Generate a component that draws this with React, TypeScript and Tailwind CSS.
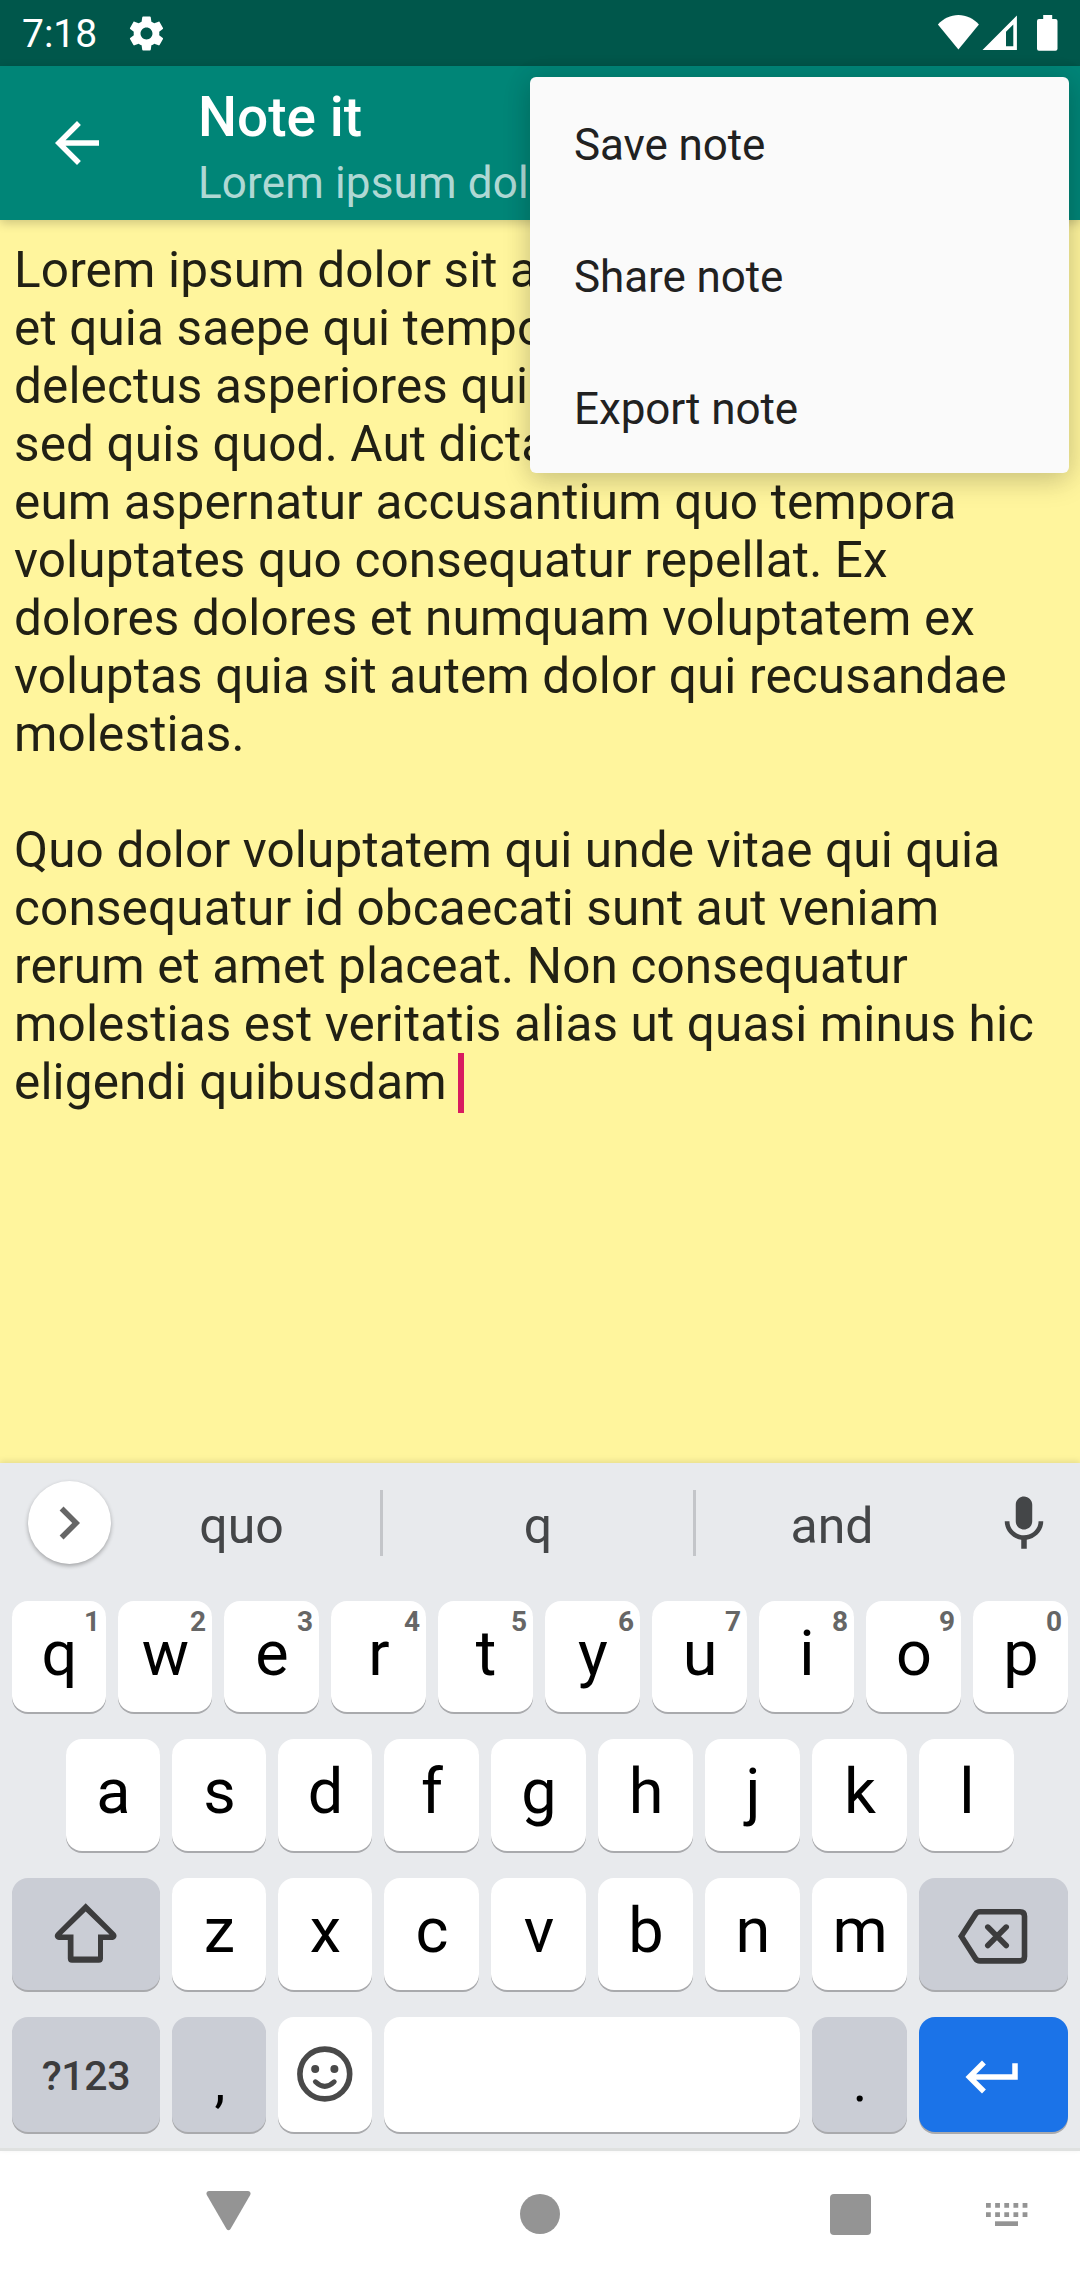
import type { ReactNode } from "react";

const noteLines = [
  "Lorem ipsum dolor sit a",
  "et quia saepe qui tempo",
  "delectus asperiores qui",
  "sed quis quod. Aut dicta",
  "eum aspernatur accusantium quo tempora",
  "voluptates quo consequatur repellat. Ex",
  "dolores dolores et numquam voluptatem ex",
  "voluptas quia sit autem dolor qui recusandae",
  "molestias.",
  "",
  "Quo dolor voluptatem qui unde vitae qui quia",
  "consequatur id obcaecati sunt aut veniam",
  "rerum et amet placeat. Non consequatur",
  "molestias est veritatis alias ut quasi minus hic",
];

const topRow = ["q", "w", "e", "r", "t", "y", "u", "i", "o", "p"];
const homeRow = ["a", "s", "d", "f", "g", "h", "j", "k", "l"];
const bottomRow = ["z", "x", "c", "v", "b", "n", "m"];

function StatusBar() {
  return (
    <div className="flex h-[66px] items-center bg-[#00574b] pl-[22px] pr-[22px] text-white">
      <span className="w-[104px] pt-[2px] text-[39px] leading-[64px]">7:18</span>
      <svg className="size-[41px]" viewBox="0 0 24 24" fill="currentColor">
        <path d="M19.43 12.98c.04-.32.07-.64.07-.98s-.03-.66-.07-.98l2.11-1.65c.19-.15.24-.42.12-.64l-2-3.46c-.12-.22-.39-.3-.61-.22l-2.49 1c-.52-.4-1.08-.73-1.69-.98l-.38-2.65C14.46 2.18 14.25 2 14 2h-4c-.25 0-.46.18-.49.42l-.38 2.65c-.61.25-1.17.59-1.69.98l-2.49-1c-.23-.09-.49 0-.61.22l-2 3.46c-.13.22-.07.49.12.64l2.11 1.65c-.04.32-.07.65-.07.98s.03.66.07.98l-2.11 1.65c-.19.15-.24.42-.12.64l2 3.46c.12.22.39.3.61.22l2.49-1c.52.4 1.08.73 1.69.98l.38 2.65c.03.24.24.42.49.42h4c.25 0 .46-.18.49-.42l.38-2.65c.61-.25 1.17-.59 1.69-.98l2.49 1c.23.09.49 0 .61-.22l2-3.46c.12-.22.07-.49-.12-.64l-2.11-1.65zM12 15.5c-1.93 0-3.5-1.57-3.5-3.5s1.57-3.5 3.5-3.5 3.5 1.57 3.5 3.5-1.57 3.5-3.5 3.5z" />
      </svg>
      <svg className="ml-auto h-[66px] w-[121px]" viewBox="937 0 121 66" fill="currentColor">
        <path d="M937.9 24.4C943.5 18.500 950.500 15 958.400 15s14.900 3.500 20.500 9.400L958.400 49.500z" />
        <path fillRule="evenodd" d="M1016.900 15.500V50H982.500zM1013.300 24.500L1006 31.800V46.200H1013.300z" />
        <path d="M1043.200 15h9v4h3.300a2 2 0 0 1 2 2v27.700a2 2 0 0 1-2 2h-16.500a2 2 0 0 1-2-2V21a2 2 0 0 1 2-2h4.200z" />
      </svg>
    </div>
  );
}

function AppBar() {
  return (
    <header className="relative z-10 flex h-[154px] bg-[#008577] pl-[44px] text-white shadow-[0_3px_10px_rgba(0,0,0,0.2)]">
      <svg className="mt-[44px] size-[66px]" viewBox="0 0 24 24" fill="currentColor">
        <path d="M20 11H7.830l5.590-5.590L12 4l-8 8 8 8 1.410-1.410L7.830 13H20v-2z" />
      </svg>
      <div className="ml-[88px] flex flex-col whitespace-nowrap pt-[19px]">
        <h1 className="text-[55px] font-medium leading-[64px]">Note it</h1>
        <p className="pt-px text-[44px] leading-[66px] tracking-[0.15px] text-white/70">Lorem ipsum dol</p>
      </div>
    </header>
  );
}

function OverflowMenu() {
  return (
    <div className="absolute left-[530px] top-[77px] z-20 flex h-[396px] w-[539px] flex-col rounded-[6px] bg-[#fafafa] shadow-[0_8px_28px_rgba(0,0,0,0.17),0_0_28px_rgba(0,0,0,0.08)]">
      {["Save note", "Share note", "Export note"].map((label) => (
        <button key={label} className="h-[132px] pl-[44px] pt-[4px] text-left text-[44px] tracking-[-0.1px] text-[#212121]">
          {label}
        </button>
      ))}
    </div>
  );
}

function NoteEditor() {
  return (
    <main className="h-[1243px] whitespace-nowrap bg-[#fff59d] pl-[14px] pt-[21px] text-[49.5px] leading-[58px] tracking-[0.14px] text-black/87">
      {noteLines.map((line, i) => (
        <p key={i} className="h-[58px]">
          {line}
        </p>
      ))}
      <p className="flex h-[58px]">
        eligendi quibusdam
        <span className="ml-[11px] h-[60px] w-[6px] bg-[#d81b60]" />
      </p>
    </main>
  );
}

function Key({ tone = "bg-white", size = "w-[95px]", children }: { tone?: string; size?: string; children?: ReactNode }) {
  return (
    <div className={`relative flex items-center justify-center rounded-[16px] text-[63px] text-black shadow-[0_2px_0_#a9aaad] ${tone} ${size}`}>
      {children}
    </div>
  );
}

function Letter({ children }: { children: ReactNode }) {
  return <span className="pb-[7px] pl-px leading-none">{children}</span>;
}

const narrow = "w-[94px]";
const special = "bg-[#cacdd5]";

function SuggestionStrip() {
  return (
    <div className="flex h-[138px] pl-[28px] text-[50px] text-[#444648]">
      <div className="mt-[18px] flex size-[83px] items-center justify-center rounded-full bg-white shadow-[0_2px_4px_rgba(0,0,0,0.3)]">
        <svg className="mr-px size-[66px]" viewBox="0 0 24 24" fill="#666">
          <path d="M10 6L8.590 7.410 13.170 12l-4.580 4.590L10 18l6-6z" />
        </svg>
      </div>
      <span className="-ml-[8px] w-[277px] pt-[34px] text-center leading-[58px]">quo</span>
      <span className="mt-[27px] h-[66px] w-[3px] bg-[#c3c5c9]" />
      <span className="w-[310px] pt-[34px] text-center leading-[58px]">q</span>
      <span className="mt-[27px] h-[66px] w-[3px] bg-[#c3c5c9]" />
      <span className="w-[272px] pt-[34px] text-center leading-[58px]">and</span>
      <svg className="ml-[23px] mt-[28px] size-[66px]" viewBox="0 0 24 24" fill="#444648">
        <path d="M12 14c1.660 0 2.990-1.340 2.990-3L15 5c0-1.660-1.340-3-3-3S9 3.340 9 5v6c0 1.660 1.340 3 3 3zm5.300-3c0 3-2.540 5.100-5.300 5.100S6.700 14 6.700 11H5c0 3.410 2.720 6.230 6 6.720V21h2v-3.280c3.280-.48 6-3.300 6-6.720h-1.700z" />
      </svg>
    </div>
  );
}

function Keyboard() {
  return (
    <section className="relative z-10 h-[688px] border-b-[3px] border-[#dfe1e0] bg-[#e8eaed] shadow-[0_-2px_6px_rgba(0,0,0,0.1)]">
      <SuggestionStrip />
      <div className="flex flex-col gap-[27px]">
        <div className="flex h-[111px] gap-[12px] px-[12px]">
          {topRow.map((letter, i) => (
            <Key key={letter} size={i < 2 ? narrow : undefined}>
              <Letter>{letter}</Letter>
              <span className="absolute right-[6px] top-[6px] text-[28px] font-bold leading-[30px] text-[#666]">{(i + 1) % 10}</span>
            </Key>
          ))}
        </div>
        <div className="flex h-[112px] gap-[12px] px-[66px]">
          {homeRow.map((letter, i) => (
            <Key key={letter} size={i < 3 ? narrow : undefined}>
              <Letter>{letter}</Letter>
            </Key>
          ))}
        </div>
        <div className="flex h-[112px] gap-[12px] px-[12px]">
          <Key tone={special} size="w-[148px]">
            <svg className="h-[112px] w-[148px]" viewBox="12 1878 148 112" fill="#3c3c3d">
              <path
                fillRule="evenodd"
                d="M85.700 1903.300L115.200 1932.800C118.300 1936 115.500 1940 112.500 1940H103V1958.500Q103 1962.700 98.800 1962.700H72Q67.800 1962.700 67.800 1958.500V1940H59C55.800 1940 53 1936 56.200 1932.800ZM85.700 1911.500L62 1934.500H73.500V1956.600H98V1934.500H109.500Z"
              />
            </svg>
          </Key>
          {bottomRow.map((letter, i) => (
            <Key key={letter} size={i < 2 ? narrow : undefined}>
              <Letter>{letter}</Letter>
            </Key>
          ))}
          <Key tone={special} size="w-[149px]">
            <svg className="h-[112px] w-[149px]" viewBox="919 1878 149 112" fill="none" stroke="#3c3c3d" strokeWidth="5.6">
              <path d="M961.300 1936.300L975.500 1914.200Q977 1911.800 980 1911.800H1020Q1024.500 1911.800 1024.500 1916.300V1956.500Q1024.500 1960.900 1020 1960.900H980Q977 1960.900 975.500 1958.500Z" />
              <path d="M987.800 1927.100L1006.200 1945.500M1006.200 1927.100L987.800 1945.500" strokeLinecap="round" />
            </svg>
          </Key>
        </div>
        <div className="flex h-[115px] gap-[12px] px-[12px]">
          <Key tone={special} size="w-[148px]">
            <span className="pt-[3px] text-[41px] font-medium leading-none tracking-[-0.3px] text-[#3c3c3d]">?123</span>
          </Key>
          <Key tone={special} size={narrow}>
            <span className="pl-[2px] pt-[16px] text-[55px] leading-none">,</span>
          </Key>
          <Key size={narrow}>
            <svg className="h-[115px] w-[94px]" viewBox="278 2017 94 115" fill="none" stroke="#494949">
              <circle cx="324.800" cy="2074" r="24.900" strokeWidth="5.600" />
              <circle cx="315.200" cy="2069" r="4" fill="#494949" stroke="none" />
              <circle cx="334.400" cy="2069" r="4" fill="#494949" stroke="none" />
              <path d="M315.400 2081.800Q324.800 2091 334.200 2081.800" strokeWidth="5" strokeLinecap="round" />
            </svg>
          </Key>
          <Key size="w-[416px]" />
          <Key tone={special}>
            <span className="pl-px pt-[16px] text-[55px] leading-none">.</span>
          </Key>
          <Key tone="bg-[#1b73e8]" size="w-[149px]">
            <svg className="mr-px mt-[4px] size-[66px]" viewBox="0 0 24 24" fill="white">
              <path d="M19 7v4H5.830l3.580-3.590L8 6l-6 6 6 6 1.410-1.410L5.830 13H21V7z" />
            </svg>
          </Key>
        </div>
      </div>
    </section>
  );
}

function NavigationBar() {
  return (
    <nav className="flex h-[129px] bg-white pl-[206px] text-[#949494]">
      <svg className="mt-[40px] h-[40px] w-[45px]" viewBox="0 0 45 40" fill="currentColor">
        <path d="M2.800 0H42.200Q45.500 .6 44.200 4L24.500 38Q22.500 40.600 20.500 38L.8 4Q-.5 .6 2.800 0Z" />
      </svg>
      <span className="ml-[269px] mt-[43px] size-[40px] rounded-full bg-current" />
      <span className="ml-[270px] mt-[43px] h-[41px] w-[41px] rounded-[4px] bg-current" />
      <svg className="ml-[115px] mt-[52px] h-[24px] w-[42px]" viewBox="0 0 42 24" fill="currentColor">
        {[0, 1, 2, 3, 4].map((column) => (
          <path key={column} d="M0 0h4.800v4.800H0zM0 9.200h4.800V14H0z" transform={`translate(${column * 9.150} 0)`} />
        ))}
        <path d="M9 18.300h23V23H9z" />
      </svg>
    </nav>
  );
}

export default function App() {
  return (
    <div className="relative flex h-[2280px] w-[1080px] flex-col overflow-hidden font-['Roboto',sans-serif]">
      <StatusBar />
      <AppBar />
      <NoteEditor />
      <Keyboard />
      <NavigationBar />
      <OverflowMenu />
    </div>
  );
}
